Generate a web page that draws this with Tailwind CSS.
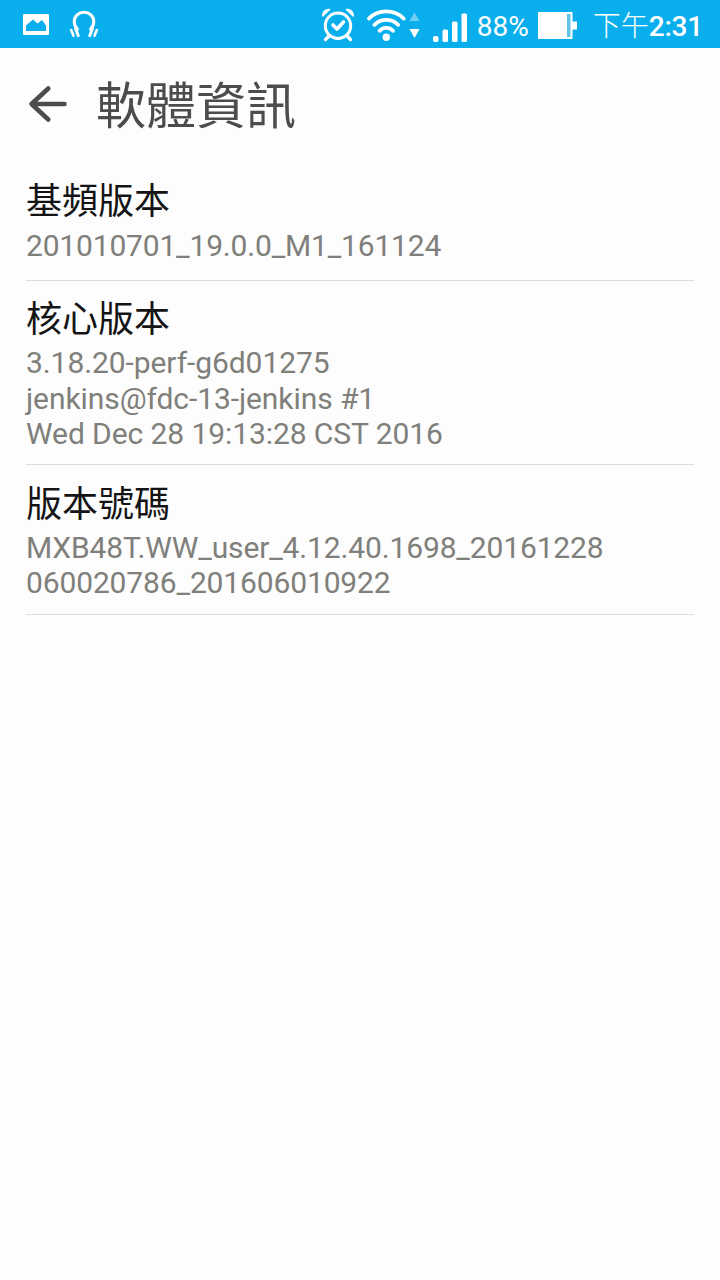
<!DOCTYPE html>
<html lang="zh-TW">
  <head>
    <meta charset="UTF-8" />
    <title>軟體資訊</title>
    <script src="https://cdn.jsdelivr.net/npm/@tailwindcss/browser@4"></script>
  </head>
  <body class="min-h-screen bg-[#fdfdfd] font-[Roboto,'Noto_Sans_CJK_TC',sans-serif]">
    <!-- Status bar -->
    <div class="flex h-12 items-center bg-[#09aeed] pr-[17px] pl-[23px] text-[28px] text-white">
      <svg class="h-12 w-[26px]" viewBox="0 0 26 48" fill="none">
        <path fill="#fff" fill-rule="evenodd" d="M1 14h24a1 1 0 0 1 1 1v19a1 1 0 0 1-1 1H1a1 1 0 0 1-1-1V15a1 1 0 0 1 1-1zM3 31h20v-5.500l-4-5.500-4.500 3.500-4.500-4L3 25.500z" />
      </svg>
      <svg class="ml-5 h-12 w-[30px]" viewBox="0 0 30 48" fill="none" stroke="#fff" stroke-width="3" stroke-linecap="round">
        <path d="M8.500 29C6 26.500 5.200 23.500 5.200 21.500c0-5.300 4.400-9.200 9.800-9.200s9.800 3.900 9.800 9.200c0 2-.8 5-3.300 7.500" />
        <path stroke-width="3" d="M6.500 28.500l2.800 7.200M23.500 28.500l-2.800 7.200" />
        <path stroke-width="2.600" d="M2.200 30l2.300 5.700M27.800 30l-2.300 5.700" />
      </svg>
      <svg class="ml-auto h-12 w-9" viewBox="0 0 36 48" fill="none" stroke="#fff" stroke-linecap="round" stroke-linejoin="round">
        <circle cx="18" cy="25.700" r="12.700" stroke-width="3" />
        <path stroke-width="3.600" d="M13 25l4 4 6.500-7" />
        <path stroke-width="3.400" d="M9 36l-3.500 3.500M27 36l3.500 3.500" />
        <path fill="#fff" stroke-width="1.500" d="M9.500 9.500C5.500 9 2.500 12 2.800 16zM26.500 9.500c4-.5 7 2.500 6.700 6.500z" />
      </svg>
      <svg class="ml-[11px] h-12 w-[53px]" viewBox="0 0 53 48" fill="none" stroke="#fff" stroke-width="3.800" stroke-linecap="round">
        <path d="M2 18.500c9-9.500 25.600-9.500 34.600 0M7.500 24.800c6.500-6.500 17.100-6.500 23.600 0M12.700 30.800c3.500-3.800 9.700-3.800 13.200 0" />
        <circle cx="19.300" cy="37.300" r="3.700" fill="#fff" stroke="none" />
        <path fill="#6fcdf4" stroke="none" d="M47.500 12.500l5 8.500h-10z" />
        <path fill="#fff" stroke="none" d="M42.500 29h10l-5 9z" />
      </svg>
      <svg class="ml-[13px] h-12 w-[34px]" viewBox="0 0 34 48" fill="#fff">
        <rect x="0" y="36" width="5.500" height="6" rx="2" />
        <rect x="9.500" y="29.500" width="5.500" height="12.500" rx="1.500" />
        <rect x="19" y="21.500" width="5.500" height="20.500" rx="1.500" />
        <rect x="28.500" y="13.500" width="5.500" height="28.500" rx="1.500" />
      </svg>
      <span class="ml-[10px] pt-[5px]">88%</span>
      <svg class="ml-[9px] h-12 w-[39px]" viewBox="0 0 39 48" fill="#fff">
        <path d="M1 12h33.500v9.500H39v8h-4.500V39H1a1 1 0 0 1-1-1V13a1 1 0 0 1 1-1z" />
        <rect x="29" y="14" width="3.500" height="23" fill="#5fc3ea" />
      </svg>
      <span class="ml-4 flex items-center"><span class="font-[Noto_Sans_CJK_TC] font-light">下午</span><span class="pt-[5px] font-medium tracking-[-0.2px]">2:31</span></span>
    </div>

    <!-- Title bar -->
    <header class="flex h-[112px] items-center pl-7">
      <svg class="h-10 w-10" viewBox="0 0 40 40" fill="none" stroke="#4c4c4c" stroke-width="4.500" stroke-linecap="round" stroke-linejoin="round">
        <path d="M36.500 20H3.500M20.300 4.500L3.500 20l16.800 15.500" />
      </svg>
      <h1 class="ml-7 pt-1.5 text-[50px] leading-[60px] text-[#4c4c4c]">軟體資訊</h1>
    </header>

    <!-- Version list -->
    <main class="px-[26px]">
      <section class="h-[121px] border-b border-[#dcdcdc] pt-[21px]">
        <h2 class="text-[36px] leading-[42px] text-[#141414]">基頻版本</h2>
        <p class="mt-[5px] text-[30px] leading-[35.500px] tracking-[-0.18px] text-[#7f7f7b]">201010701_19.0.0_M1_161124</p>
      </section>
      <section class="h-[184px] border-b border-[#dcdcdc] pt-[18px]">
        <h2 class="text-[36px] leading-[42px] text-[#141414]">核心版本</h2>
        <p class="mt-1 text-[30px] leading-[35.500px] tracking-[-0.08px] text-[#7f7f7b]">3.18.20-perf-g6d01275<br />jenkins@fdc-13-jenkins #1<br />Wed Dec 28 19:13:28 CST 2016</p>
      </section>
      <section class="h-[150px] border-b border-[#dcdcdc] pt-[19px]">
        <h2 class="text-[36px] leading-[42px] text-[#141414]">版本號碼</h2>
        <p class="mt-1 text-[30px] leading-[35.200px] tracking-[-0.14px] text-[#7f7f7b]">MXB48T.WW_user_4.12.40.1698_20161228<br />060020786_201606010922</p>
      </section>
    </main>
  </body>
</html>
